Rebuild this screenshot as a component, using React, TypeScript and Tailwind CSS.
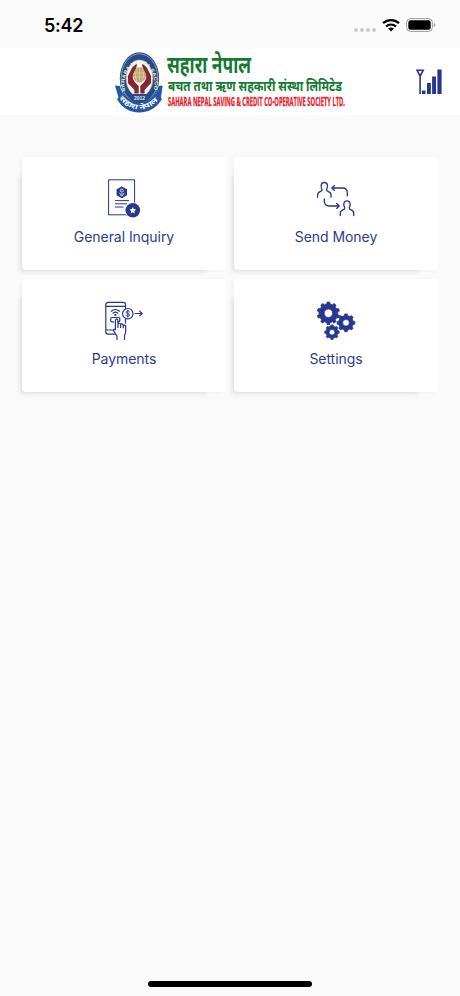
import type { ReactNode } from "react";

const BLUE = "#27378f";

function gearPath(cx: number, cy: number, outer: number, inner: number, hole: number, teeth: number) {
  const step = (Math.PI * 2) / teeth;
  const pt = (r: number, a: number) => `${(cx + r * Math.sin(a)).toFixed(2)} ${(cy - r * Math.cos(a)).toFixed(2)}`;
  let d = "";
  for (let i = 0; i < teeth; i++) {
    const a = i * step;
    d += `${i === 0 ? "M" : "L"}${pt(inner, a - step * 0.29)}L${pt(outer, a - step * 0.19)}L${pt(outer, a + step * 0.19)}L${pt(inner, a + step * 0.29)}`;
    d += `A${inner} ${inner} 0 0 1 ${pt(inner, a + step * 0.71)}`;
  }
  return `${d}ZM${cx - hole} ${cy}a${hole} ${hole} 0 1 0 ${hole * 2} 0a${hole} ${hole} 0 1 0 ${-hole * 2} 0Z`;
}

function InquiryIcon() {
  return (
    <svg className="h-10 w-10" viewBox="0 0 40 40" fill="none" stroke={BLUE}>
      <rect x="4.6" y="0.8" width="26" height="35" strokeWidth="1" />
      <path d="M17.8 7.400l5.200 2.900v6l-5.200 2.900-5.200-2.900v-6z" fill={BLUE} stroke="none" />
      <circle cx="17.8" cy="11.6" r="1.5" stroke="#fff" strokeWidth="0.8" />
      <path d="M15.200 14c.8 1.600 4.400 1.600 5.200 0M16 15.600l1.800 1.200 1.800-1.200" stroke="#fff" strokeWidth="0.8" />
      <path d="M11 21.600h14M11 24.800h12M11 28h8.500" strokeWidth="1" />
      <circle cx="28.800" cy="31.300" r="8" fill="#fff" stroke="none" />
      <circle cx="28.800" cy="31.300" r="7.300" fill={BLUE} stroke="none" />
      <path d="M28.800 27.900l1 2.200 2.400.3-1.800 1.600.5 2.400-2.100-1.200-2.100 1.200.5-2.400-1.800-1.600 2.400-.3z" fill="#fff" stroke="none" />
    </svg>
  );
}

function SendIcon() {
  const person = "M1.300 16.700v-2.400c0-2.200 1.400-2.900 3-3.500 1.300-.5 1.600-1 1.400-2C4.900 7.600 4.600 6.300 4.900 4.700 5.200 2.900 6.400 2 8 2s2.800.9 3.100 2.700c.3 1.600 0 2.900-.8 4.100-.2 1 .1 1.500 1.400 2 1.600.6 3 1.300 3 3.500v2.400";
  return (
    <svg className="h-10 w-10" viewBox="0 0 40 40" fill="none" stroke={BLUE} strokeWidth="1.3" strokeLinecap="round" strokeLinejoin="round">
      <path d={person} transform="translate(.3 1.500)" />
      <path d={person} transform="translate(23 19.800)" />
      <path d="M31.300 16.800V14c0-3.200-1.800-5-5-5H16M18.500 6.600L15.800 9l2.700 2.400" />
      <path d="M8.300 20v2c0 3.200 1.800 5 5 5h9.600M20.600 24.600l2.700 2.400-2.700 2.400" />
    </svg>
  );
}

function PaymentIcon() {
  return (
    <svg className="h-10 w-10" viewBox="0 0 40 40" fill="none" stroke={BLUE} strokeWidth="1.2" strokeLinecap="round" strokeLinejoin="round">
      <path d="M21.500 8V3.700c0-1.500-.9-2.400-2.400-2.400H4.200C2.700 1.300 1.800 2.200 1.800 3.700v27c0 1.500.9 2.400 2.400 2.400h7M21.500 18v4M2 5.400h19.300M2 29h7.600" />
      <path d="M7.200 10.200c2.400-2.100 6-2.100 8.400 0M9 12.200c1.500-1.200 3.300-1.200 4.800 0" />
      <circle cx="11.400" cy="14" r="0.500" fill={BLUE} />
      <path d="M9.600 20.800H8c-.9 0-1.300-.5-1.300-1.300v-1.700c0-.8.4-1.300 1.300-1.300h6.500c.9 0 1.300.5 1.300 1.300v1.700c0 .8-.4 1.300-1.300 1.300h-.8" />
      <path d="M13 38.500v-3.300l-3.300-5c-.8-1.300.4-2.600 1.700-1.500V19.500c0-1.800 2.600-1.800 2.600 0v7-3c0-1.700 2.600-1.700 2.600 0v3-2.300c0-1.700 2.600-1.700 2.600 0v2.600-1.500c0-1.600 2.500-1.600 2.500 0v5.200c0 1.900-1.200 2.500-1.200 4.700v3.300" />
      <circle cx="23.800" cy="12.700" r="5.200" fill="#fff" />
      <path d="M25.500 11c-.3-.8-1-1-1.700-1-1 0-1.700.5-1.700 1.300 0 1.800 3.400.9 3.400 2.800 0 .8-.7 1.300-1.700 1.300s-1.700-.4-1.800-1.200M23.800 9.200v7" strokeWidth="1" />
      <path d="M31 12.500h7M35.700 10.100l2.500 2.400-2.500 2.400" />
    </svg>
  );
}

function SettingsIcon() {
  return (
    <svg className="h-10 w-10" viewBox="0 0 40 40" fill={BLUE} fillRule="evenodd" stroke={BLUE} strokeWidth="0.7" strokeLinejoin="round">
      <path d={gearPath(12.400, 12.300, 11.300, 9.400, 4.200, 10)} />
      <path d={gearPath(30, 21.800, 9, 7.300, 3.300, 8)} />
      <path d={gearPath(16, 31.200, 7.300, 6, 2.800, 8)} />
    </svg>
  );
}

function Emblem() {
  return (
    <g>
      <ellipse cx="139.500" cy="79.500" rx="19.700" ry="26.200" fill="#244a91" />
      <ellipse cx="139.500" cy="79.500" rx="18.400" ry="24.700" fill="none" stroke="#a9b986" strokeWidth="0.800" />
      <ellipse cx="139.500" cy="79.300" rx="13.400" ry="18.400" fill="#fbfaf4" stroke="#a9b27e" strokeWidth="0.700" />
      <defs>
        <path id="ring" d="M125.300 92A15 20.400 0 1 1 153.700 92" />
        <path id="ribbon" d="M119 99.500Q139.500 121.500 160 99.500" />
      </defs>
      <text fontFamily="Liberation Sans" fontWeight="700" fontSize="5" fill="#f0edc6">
        <textPath href="#ring" textLength="84" lengthAdjust="spacingAndGlyphs">SAHARA NEPAL SACCOS LTD</textPath>
      </text>
      <path d="M137 65c-3 1-5 3-6.500 7l-2.600 5v7l6.500 7v3.500h4.300V87c-3-3-6.200-5.500-5.900-10 .2-4 4.200-7 4.200-12zM142 65c3 1 5 3 6.500 7l2.600 5v7l-6.500 7v3.500h-4.300V87c3-3 6.200-5.500 5.900-10-.2-4-4.200-7-4.200-12z" fill="#842632" />
      <ellipse cx="139.500" cy="76" rx="5.900" ry="7.200" fill="#c3a76c" stroke="#8a7447" strokeWidth="0.600" />
      <path d="M134 74h11M134 78h11M139.500 69v14M137 69.500c-2 4-2 9 0 13M142 69.500c2 4 2 9 0 13" stroke="#eadab0" strokeWidth="0.600" fill="none" />
      <path d="M133 95h13v7h-13z" fill="#244a91" />
      <text x="139.500" y="100.500" textAnchor="middle" fontFamily="Liberation Sans" fontWeight="700" fontSize="5" fill="#e9edda">2012</text>
      <path d="M115 86.500l5 .5c2 9.500 10 16 19.300 16S156.800 96.500 158.600 87l4-.5-1.600 12 1 1.500c-5 8.500-13 13.500-22.700 13.500S121.500 108.500 117 100l1.500-1.500z" fill="#2457a5" />
      <text fontFamily="Noto Sans, Noto Sans Devanagari, sans-serif" fontWeight="700" fontSize="7" fill="#fff">
        <textPath href="#ribbon" textLength="45" lengthAdjust="spacingAndGlyphs">सहारा नेपाल</textPath>
      </text>
    </g>
  );
}

function BrandLogo() {
  return (
    <svg className="h-[64px] w-[236px]" viewBox="113 51 236 64">
      <Emblem />
      <g fontFamily="Noto Sans, Noto Sans Devanagari, sans-serif" fontWeight="700" fill="#147a31">
        <text x="167" y="73.500" fontSize="23.500" textLength="84" lengthAdjust="spacingAndGlyphs">सहारा नेपाल</text>
        <text x="168" y="92.300" fontSize="14.500" textLength="174" lengthAdjust="spacingAndGlyphs">बचत तथा ऋण सहकारी संस्था लिमिटेड</text>
      </g>
      <text x="168" y="107" fontFamily="Open Sans, sans-serif" fontWeight="700" fontSize="12.500" fill="#e5222f" stroke="#e5222f" strokeWidth="0.350" textLength="177" lengthAdjust="spacingAndGlyphs">
        SAHARA NEPAL SAVING &amp; CREDIT CO-OPERATIVE SOCIETY LTD.
      </text>
    </svg>
  );
}

function SignalIcon() {
  return (
    <svg className="h-[26px] w-[26px]" viewBox="0 0 26 26" fill={BLUE}>
      <path d="M1 1.200h6.200L4.100 7.200zM4.100 7v18" fill="none" stroke={BLUE} strokeWidth="1.600" />
      <path d="M6 21.500h3.500V25H6zM11 14h3.900v11H11zM16.100 7.500H20V25h-3.900zM21.400.5h4.200V25h-4.200z" />
    </svg>
  );
}

function StatusBar() {
  return (
    <div className="flex h-12 items-center justify-between pl-11 pr-6">
      <span className="pt-[3px] text-[18px] font-semibold leading-6 tracking-[-0.3px] text-black">5:42</span>
      <div className="flex items-center pt-0.5">
        <div className="mr-[6px] mt-2.5 flex gap-[2px]">
          <i className="size-[4px] rounded-full bg-[#c9c9c9]" />
          <i className="size-[4px] rounded-full bg-[#c9c9c9]" />
          <i className="size-[4px] rounded-full bg-[#c9c9c9]" />
          <i className="size-[4px] rounded-full bg-[#c9c9c9]" />
        </div>
        <svg className="mr-[6px] h-[14px] w-[18px]" viewBox="0 0 18 14" fill="none" stroke="#000" strokeWidth="2.300">
          <path d="M1 5.200c4.500-4.200 11.500-4.200 16 0M4 8.500c2.900-2.600 7.100-2.600 10 0" />
          <path d="M9 13.400l-2.900-2.900c1.700-1.400 4.100-1.400 5.800 0z" fill="#000" stroke="none" />
        </svg>
        <svg className="h-[14px] w-[30px]" viewBox="0 0 30 14">
          <rect x="0.600" y="0.600" width="25.800" height="12.800" rx="4" fill="none" stroke="#9b9b9b" />
          <rect x="2.300" y="2.300" width="22.400" height="9.400" rx="2.500" />
          <path d="M27.800 4.800c2 .8 2 3.600 0 4.400z" fill="#9b9b9b" />
        </svg>
      </div>
    </div>
  );
}

function Tile({ label, children }: { label: string; children: ReactNode }) {
  return (
    <button className="flex h-[113px] flex-col items-center rounded-[4px] bg-white pt-[22px] shadow-[-11px_11px_4px_-8px_rgba(0,0,0,0.06),-2px_1px_4px_-1px_rgba(0,0,0,0.06)]">
      {children}
      <span className="mt-[8px] whitespace-nowrap text-[14px] leading-5 tracking-[-0.05px] text-[#2d3c91]">{label}</span>
    </button>
  );
}

export default function App() {
  return (
    <div className="flex h-[996px] w-[460px] flex-col overflow-hidden bg-[#fafafa] font-['Inter',sans-serif]">
      <StatusBar />
      <header className="flex h-[67px] items-center justify-between bg-white pl-[113px] pr-[18px]">
        <BrandLogo />
        <SignalIcon />
      </header>
      <main className="grid grid-cols-[204px_204px] gap-x-2 gap-y-[9px] pl-[22px] pt-[42px]">
        <Tile label="General Inquiry"><InquiryIcon /></Tile>
        <Tile label="Send Money"><SendIcon /></Tile>
        <Tile label="Payments"><PaymentIcon /></Tile>
        <Tile label="Settings"><SettingsIcon /></Tile>
      </main>
      <div className="mx-auto mb-[9px] mt-auto h-[6px] w-[164px] rounded-full bg-black" />
    </div>
  );
}
